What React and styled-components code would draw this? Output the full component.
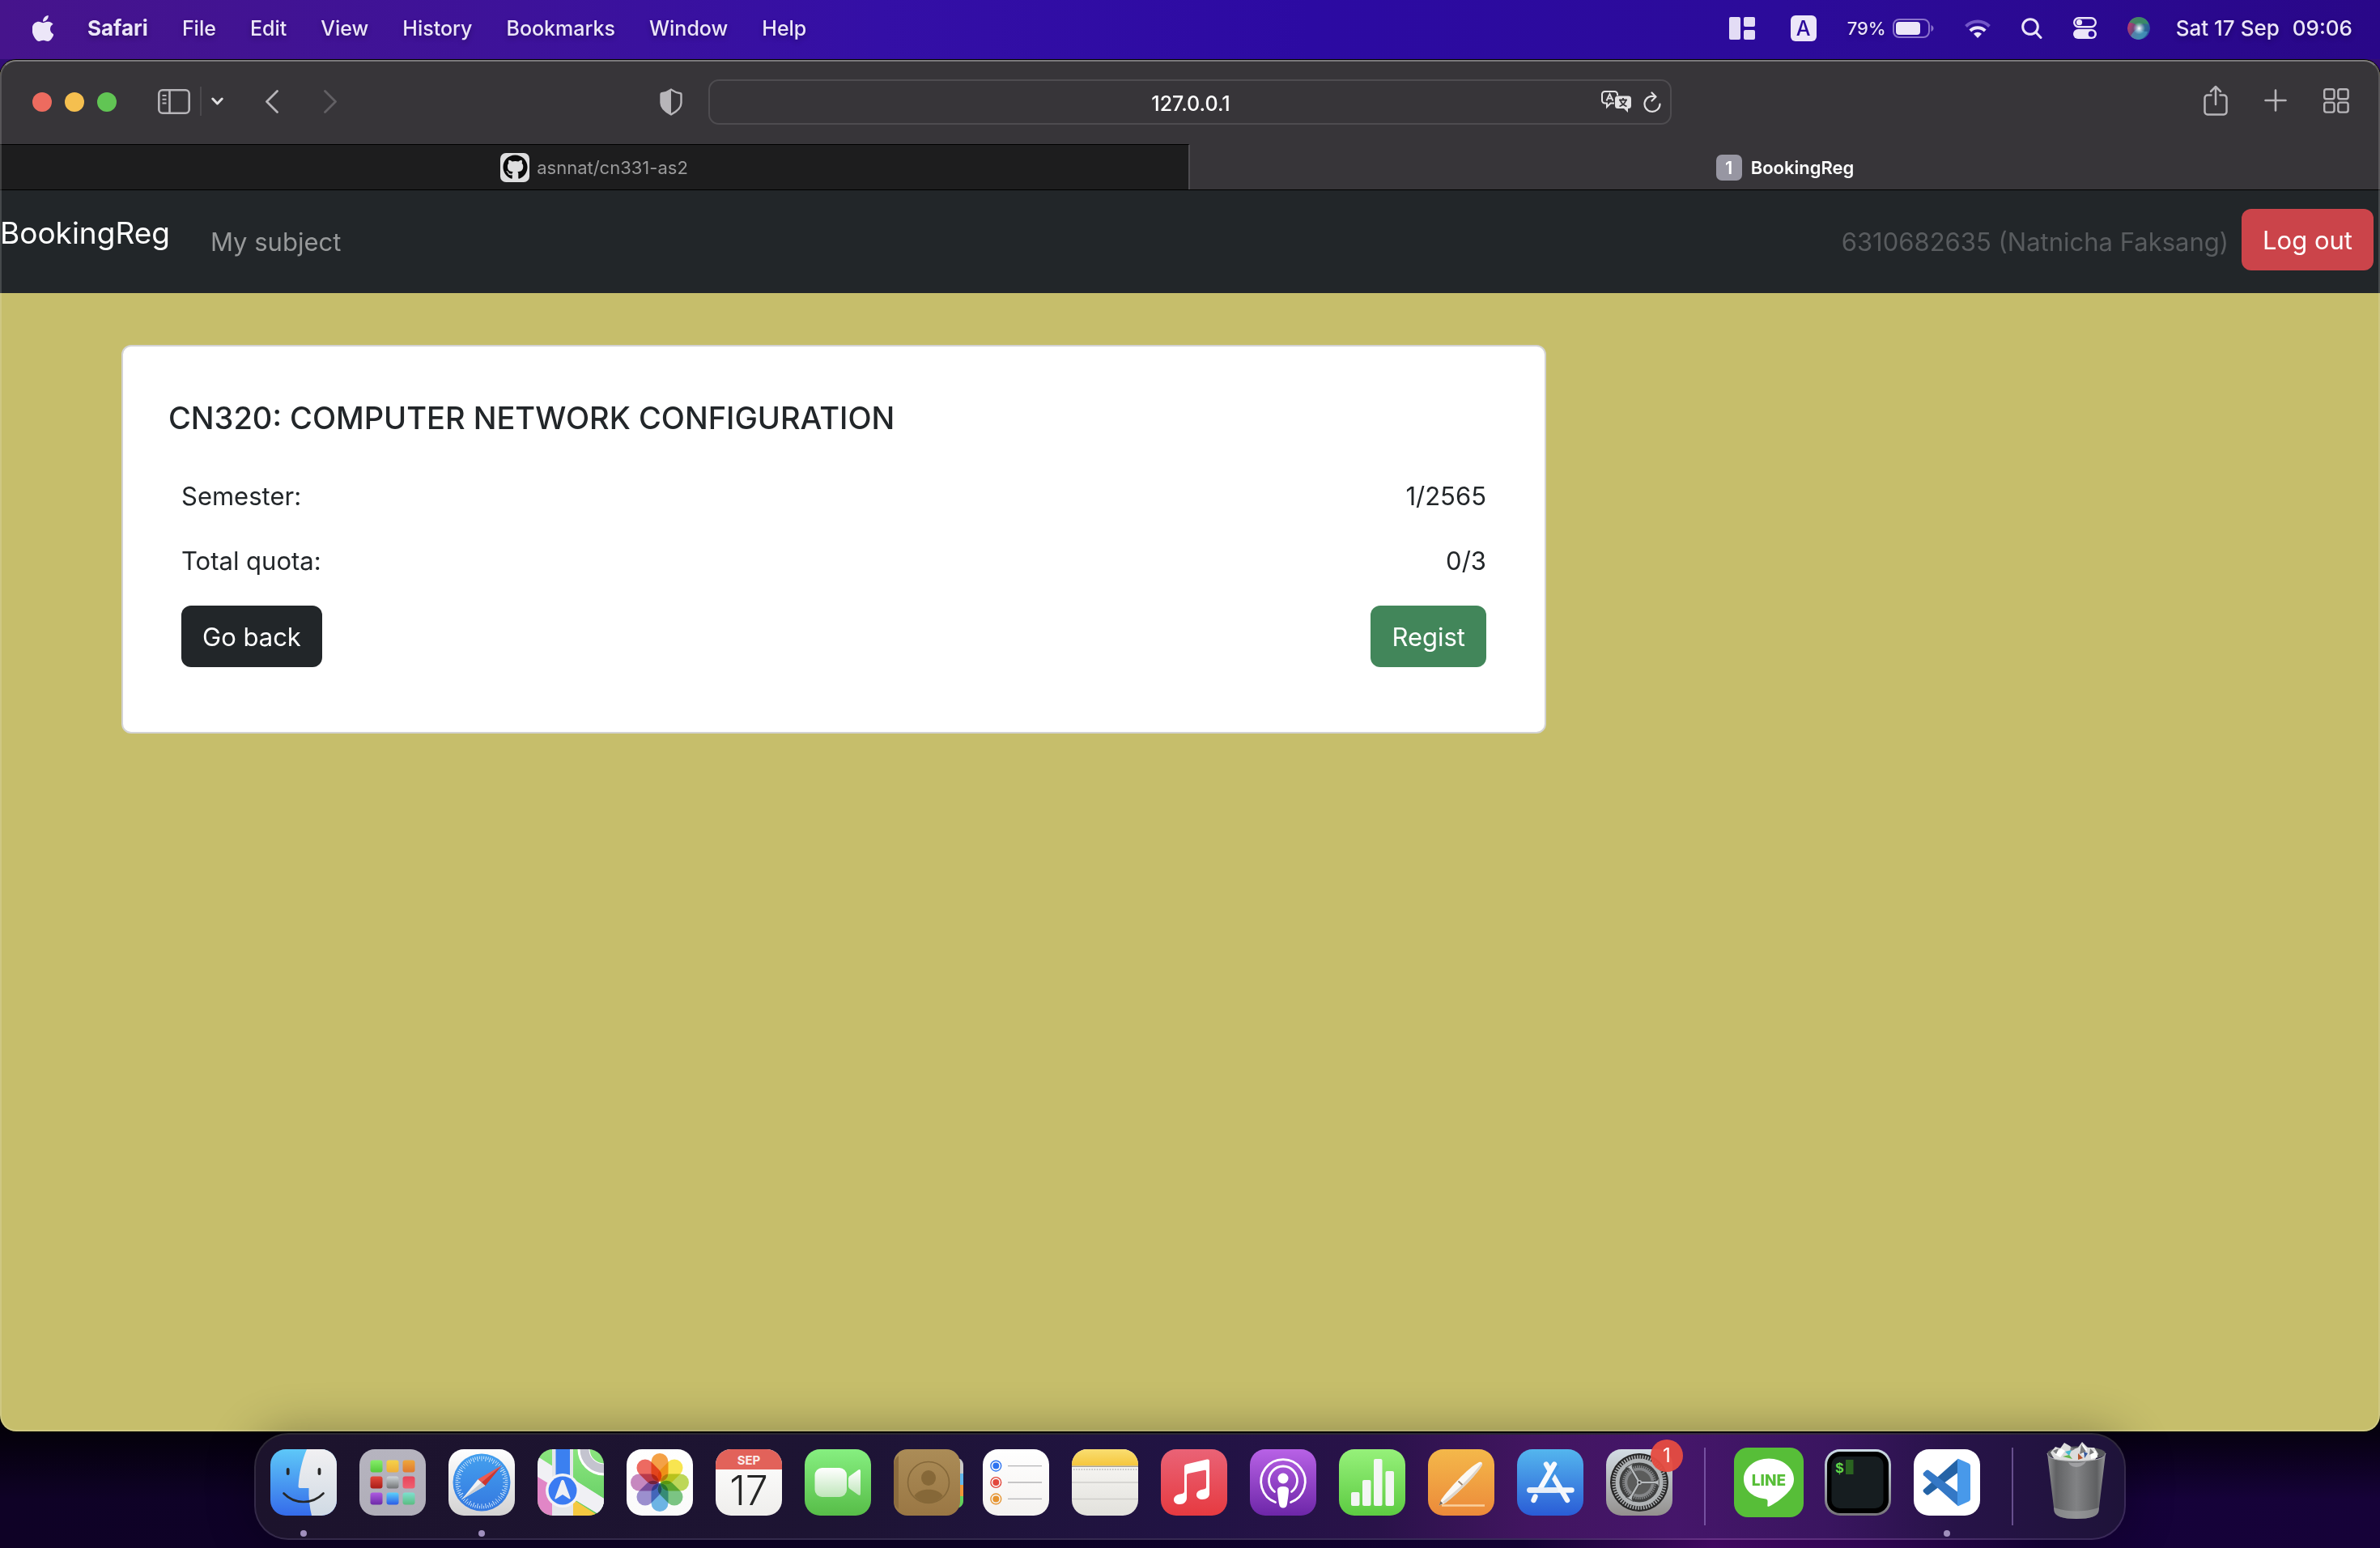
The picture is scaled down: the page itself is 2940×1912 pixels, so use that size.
import React from "react";
import styled, { createGlobalStyle } from "styled-components";
import { FaApple, FaGithub } from "react-icons/fa";

const GlobalStyle = createGlobalStyle`
  *, *::before, *::after { box-sizing: border-box; }
  body { margin: 0; background: #0a0118; }
  body, button, input { font-family: Inter, "Liberation Sans", sans-serif; }
  button { margin: 0; padding: 0; border: 0; background: none; color: inherit; cursor: pointer; }
  svg { display: block; flex: none; }
`;

const Desktop = styled.div`
  display: flex;
  flex-direction: column;
  min-height: 100vh;
  background:
    linear-gradient(#3a1080 0, #2c0a70 120px, transparent 200px),
    linear-gradient(to top, transparent 60px, rgba(0, 0, 0, 0.72) 144px),
    linear-gradient(90deg, #0f0226 0%, #0d022a 40%, #16033c 64%, #4b0a70 72%, #3a0862 78%, #15023a 86%, #160238 100%);
`;

/* ---------- menu bar ---------- */

const MenuBar = styled.header`
  display: flex;
  justify-content: space-between;
  align-items: center;
  height: 73px;
  padding: 0 34px 4px 40px;
  color: #ece6f8;
  font-size: 25px;
  font-weight: 500;
  line-height: 32px;
  text-shadow: 0 3px 6px rgba(0, 0, 0, 0.3);
  background: linear-gradient(90deg, #46148c 0%, #3d129a 22%, #340fa6 37%, #2c0aa2 55%, #2c0b9a 75%, #290788 100%);
`;

const MenuGroup = styled.nav`
  display: flex;
  align-items: center;
  gap: 42px;
`;

const MenuButton = styled.button`
  font-size: ${(p) => (p.$bold ? 26 : 25)}px;
  line-height: 32px;
  font-weight: ${(p) => (p.$bold ? 700 : 500)};
  text-shadow: inherit;
`;

const AppleLogo = styled(FaApple)`
  width: 26px;
  height: 34px;
`;

const StatusGroup = styled.div`
  display: flex;
  align-items: center;
  gap: 38px;
`;

const InputSource = styled.span`
  display: grid;
  place-items: center;
  width: 32px;
  height: 32px;
  margin: 0 0 0 6px;
  border-radius: 6px;
  background: #ece6f8;
  color: #2c0b9a;
  font-size: 25px;
  text-shadow: none;
`;

const Battery = styled.span`
  display: flex;
  align-items: center;
  gap: 8px;
  font-size: 22px;
`;

const Clock = styled.time`
  display: flex;
  gap: 16px;
  margin-left: -6px;
  font-size: 26px;
`;

/* ---------- browser window ---------- */

const Window = styled.main`
  position: relative;
  display: flex;
  flex: 1;
  flex-direction: column;
  margin-top: 1px;
  border-radius: 20px;
  overflow: hidden;
  background: #c6be6b;
  box-shadow: 0 0 0 1px #000;

  &::after {
    content: "";
    position: absolute;
    inset: 0;
    border: 2px solid rgba(255, 255, 255, 0.16);
    border-top-color: rgba(255, 255, 255, 0.34);
    border-radius: inherit;
    pointer-events: none;
  }
`;

const Toolbar = styled.div`
  display: grid;
  grid-template-columns: 1fr minmax(400px, 1190px) 1fr;
  align-items: center;
  height: 104px;
  background: #373539;
  color: #b7b5b9;
`;

const ToolbarStart = styled.div`
  display: flex;
  align-items: center;
  justify-content: space-between;
  padding: 0 32px 0 40px;
`;

const ToolbarEnd = styled.div`
  display: flex;
  align-items: center;
  justify-content: flex-end;
  gap: 45px;
  padding: 0 38px 4px 0;
`;

const Controls = styled.div`
  display: flex;
  align-items: center;
`;

const Lights = styled.div`
  display: flex;
  gap: 16px;
  margin-right: 51px;
`;

const Light = styled.button`
  width: 24px;
  height: 24px;
  border-radius: 50%;
  background: ${(p) => p.$color};
`;

const SidebarSplit = styled.div`
  display: flex;
  align-items: center;
  gap: 12px;
  margin-right: 52px;
  padding-bottom: 2px;
`;

const ThinRule = styled.span`
  width: 2px;
  height: 36px;
  background: #4b494d;
`;

const History = styled.div`
  display: flex;
  gap: 56px;
  padding-bottom: 2px;
`;

const AddressField = styled.div`
  display: grid;
  grid-template-columns: 90px 1fr 90px;
  align-items: center;
  height: 56px;
  border: 2px solid #4e4c50;
  border-radius: 13px;
  color: #e2e1e3;
`;

const AddressInput = styled.input`
  grid-column: 2;
  min-width: 0;
  padding: 3px 0 0 2px;
  border: 0;
  outline: 0;
  background: none;
  color: #fff;
  font-size: 25px;
  font-weight: 500;
  line-height: 32px;
  text-align: center;
`;

const AddressActions = styled.div`
  display: flex;
  align-items: center;
  justify-content: flex-end;
  gap: 14px;
  padding-right: 11px;
`;

const TabBar = styled.div`
  display: grid;
  grid-template-columns: 1fr 1fr;
  height: 57px;
  border-bottom: 1px solid #000;
  background: #373539;
`;

const Tab = styled.button`
  display: flex;
  align-items: center;
  justify-content: center;
  gap: ${(p) => (p.$active ? 11 : 9)}px;
  border-top: 1px solid ${(p) => (p.$active ? "#373539" : "#000")};
  border-right: ${(p) => (p.$active ? 0 : 2)}px solid #4e4c50;
  background: ${(p) => (p.$active ? "#373539" : "#1d1d1e")};
  color: ${(p) => (p.$active ? "#fff" : "#9a9a9b")};
  font-size: 22px;
  font-weight: ${(p) => (p.$active ? 600 : 400)};
  line-height: 28px;
`;

const TabIcon = styled.span`
  display: grid;
  place-items: center;
  width: ${(p) => p.$size}px;
  height: ${(p) => p.$size}px;
  border-radius: 7px;
  background: ${(p) => p.$bg};
  color: ${(p) => p.$color};
`;

/* ---------- BookingReg page ---------- */

const PageNav = styled.nav`
  display: flex;
  align-items: flex-start;
  justify-content: space-between;
  padding: 23px 8px 24px 0;
  background: #222629;
`;

const NavSide = styled.div`
  display: flex;
  align-items: flex-start;
`;

const Brand = styled.a`
  margin-right: 50px;
  color: #fff;
  font-size: 37px;
  line-height: 60px;
  text-decoration: none;
`;

const NavLink = styled.a`
  padding: 17px 0 15px;
  color: #97999a;
  font-size: 31px;
  line-height: 48px;
  text-decoration: none;
`;

const UserName = styled.span`
  padding: 17px 16px 15px;
  color: #595c5f;
  font-size: 31px;
  line-height: 48px;
`;

const buttonColors = { danger: "#cb444a", dark: "#222629", success: "#42865a" };

const PageButton = styled.button`
  padding: 15px 26px 13px;
  border-radius: 12px;
  background: ${(p) => buttonColors[p.$tone]};
  color: #fff;
  font-size: 31px;
  line-height: 48px;
`;

const Content = styled.section`
  padding: 64px 150px;
`;

const Card = styled.article`
  max-width: 1760px;
  padding: 64px 56px;
  border: 2px solid #d3d3d4;
  border-radius: 12px;
  background: #fff;
  color: #222629;
`;

const CardTitle = styled.h1`
  margin: 0 0 32px;
  font-size: 38px;
  font-weight: 500;
  line-height: 48px;
`;

const Details = styled.table`
  width: 100%;
  border-collapse: collapse;
  font-size: 31px;
  line-height: 48px;

  th, td { padding: 17px 16px 15px; font-weight: 400; text-align: left; vertical-align: top; }
  td:last-child { text-align: right; }
  tr:last-child td { padding: 16px; }
  button { display: inline-block; vertical-align: top; }
`;

/* ---------- dock ---------- */

const DockArea = styled.footer`
  display: flex;
  justify-content: center;
  padding: 2px 0 10px;
`;

const Dock = styled.nav`
  position: relative;
  display: flex;
  align-items: flex-start;
  gap: 28px;
  padding: 18px 18px 2px;
  border: 2px solid rgba(255, 255, 255, 0.16);
  border-radius: 42px;
  background: linear-gradient(90deg, #1c132c 0%, #1d1433 30%, #211344 50%, #291249 60%, #411560 68%, #45166a 76%, #3a1560 84%, #271348 91%, #1e1339 100%);
  background-clip: padding-box;
  box-shadow: 0 0 60px rgba(0, 0, 0, 0.32);
`;

const DockItem = styled.button`
  position: relative;
  display: flex;
  flex-direction: column;
  align-items: center;
  gap: 18px;
  width: 82px;

  svg { overflow: visible; }
`;

const RunningDot = styled.span`
  width: 8px;
  height: 8px;
  border-radius: 50%;
  background: ${(p) => (p.$on ? "#a08fbd" : "transparent")};
`;

const DockRule = styled.span`
  align-self: flex-start;
  width: 2px;
  height: 96px;
  margin: -2px 9px 0 11px;
  background: rgba(170, 140, 215, 0.5);
`;

const Badge = styled.span`
  position: absolute;
  top: -12px;
  right: -13px;
  display: grid;
  place-items: center;
  width: 40px;
  height: 40px;
  border-radius: 50%;
  background: rgba(229, 76, 66, 0.96);
  color: #fff;
  font-size: 24px;
  line-height: 32px;
`;

/* ---------- line icons ---------- */

const WindowsIcon = () => (
  <svg width="32" height="28" viewBox="0 0 32 28" fill="#e3dcf5">
    <rect width="14" height="28" rx="2" />
    <rect x="18" width="14" height="12" rx="2" />
    <rect x="18" y="16" width="14" height="12" rx="2" />
  </svg>
);

const BatteryIcon = () => (
  <svg width="51" height="24" viewBox="0 0 51 24">
    <rect x="1" y="1" width="44" height="22" rx="7" fill="none" stroke="#8a72cc" strokeWidth="2" />
    <rect x="4" y="4" width="30" height="16" rx="4" fill="#ece6f8" />
    <path d="M47.500 8c4 1.500 4 6.500 0 8z" fill="#8a72cc" />
  </svg>
);

const WifiIcon = () => (
  <svg width="32" height="24" viewBox="0 0 32 24" fill="none" strokeWidth="4">
    <path d="M1.500 9.500a20.500 20.500 0 0 1 29 0" stroke="#7457c8" />
    <path d="M6.800 15a13 13 0 0 1 18.400 0" stroke="#ece6f8" />
    <path d="M16 24l-5-5.200a7.300 7.300 0 0 1 10 0z" fill="#ece6f8" />
  </svg>
);

const SearchIcon = () => (
  <svg width="26" height="26" viewBox="0 0 26 26" fill="none" stroke="#ece6f8" strokeWidth="3" strokeLinecap="round">
    <circle cx="11" cy="11" r="9.300" />
    <path d="M18 18l6 6.500" />
  </svg>
);

const ControlIcon = () => (
  <svg width="29" height="27" viewBox="0 0 29 27">
    <rect x="1.200" y="1.200" width="26.600" height="11" rx="5.500" fill="none" stroke="#ece6f8" strokeWidth="2.400" />
    <circle cx="7.500" cy="6.700" r="3.600" fill="#ece6f8" />
    <rect y="15" width="29" height="12" rx="6" fill="#ece6f8" />
    <circle cx="22.500" cy="21" r="3.800" fill="#2c0b9a" />
  </svg>
);

const SiriIcon = () => (
  <svg width="28" height="28" viewBox="0 0 28 28">
    <defs>
      <linearGradient id="siri" x1="0" y1="0.300" x2="1" y2="0.700">
        <stop offset="0" stopColor="#c8386f" />
        <stop offset="0.400" stopColor="#5b4a7a" />
        <stop offset="0.700" stopColor="#2f6f90" />
        <stop offset="1" stopColor="#2a4ea0" />
      </linearGradient>
      <radialGradient id="siriGlow">
        <stop offset="0" stopColor="#fff" />
        <stop offset="1" stopColor="#bfe9ff" stopOpacity="0" />
      </radialGradient>
      <clipPath id="siriClip"><circle cx="14" cy="14" r="14" /></clipPath>
    </defs>
    <g clipPath="url(#siriClip)">
      <circle cx="14" cy="14" r="14" fill="url(#siri)" />
      <path d="M2 7C7-4 24-3 26 9c-7-2-10 0-12 4-2-3-6-6-12-6z" fill="#3a8f63" opacity="0.850" />
      <path d="M4 24c3-7 8-9 10-10 3 3 6 4 11 4-2 9-14 14-21 6z" fill="#4fa5c8" opacity="0.600" />
      <circle cx="14.500" cy="14" r="7.500" fill="url(#siriGlow)" />
    </g>
  </svg>
);

const SidebarIcon = () => (
  <svg width="40" height="31" viewBox="0 0 40 31" fill="none" stroke="currentColor" strokeWidth="2.600">
    <rect x="1.300" y="1.300" width="37.400" height="28.400" rx="4.500" />
    <path d="M14.500 1v29" />
    <path d="M5.500 8h5M5.500 12.700h5M5.500 17.400h5" strokeWidth="2" />
  </svg>
);

const ChevronDown = () => (
  <svg width="15" height="10" viewBox="0 0 15 10" fill="none" stroke="#e0dfe1" strokeWidth="3" strokeLinecap="round" strokeLinejoin="round">
    <path d="M1.800 2l5.700 6 5.700-6" />
  </svg>
);

const Chevron = ({ flip, color }) => (
  <svg width="16" height="29" viewBox="0 0 16 29" fill="none" stroke={color} strokeWidth="2.800" strokeLinecap="round" strokeLinejoin="round">
    <path d={flip ? "M1.500 1.500l13 13-13 13" : "M14.500 1.500l-13 13 13 13"} />
  </svg>
);

const ShieldIcon = () => (
  <svg width="28" height="34" viewBox="0 0 28 34" fill="none">
    <path d="M14 1.600c3.600 2.700 7.600 4 11.500 4.600q1 .200 1 1.300V18c0 7-6.500 11.300-12.500 14.400C8 29.300 1.500 25 1.500 18V7.500q0-1.100 1-1.300C6.400 5.600 10.400 4.300 14 1.600z" stroke="currentColor" strokeWidth="2.400" />
    <path d="M14 1.600C10.400 4.300 6.400 5.600 2.500 6.200q-1 .200-1 1.300V18c0 7 6.500 11.300 12.500 14.400z" fill="currentColor" />
  </svg>
);

const TranslateIcon = () => (
  <svg width="38" height="28" viewBox="0 0 38 28" fill="none" stroke="currentColor" strokeWidth="2">
    <path d="M16 15.500h-4.500L7 20v-4.500H4.500A3.500 3.500 0 0 1 1 12V4.500A3.500 3.500 0 0 1 4.500 1h12A3.500 3.500 0 0 1 20 4.500V6" />
    <path d="M6.500 12.500L10.500 4l4 8.500M8 9.600h5" strokeWidth="1.800" />
    <path d="M20.500 6.500h13A3.500 3.500 0 0 1 37 10v8.500a3.500 3.500 0 0 1-3.500 3.500H33v5l-5-5h-7.500a3.500 3.500 0 0 1-3.500-3.500V10a3.500 3.500 0 0 1 3.500-3.500z" fill="currentColor" stroke="none" />
    <path d="M22 11.500h10M27 9v2.500M30.500 11.500c-1 3.500-4 6.500-8 8M23.500 11.500c1 3.500 4 6.500 8 8" stroke="#373539" strokeWidth="1.800" />
  </svg>
);

const ReloadIcon = () => (
  <svg width="22" height="27" viewBox="0 0 22 27" fill="none" stroke="currentColor" strokeWidth="2.200" strokeLinecap="round" strokeLinejoin="round">
    <path d="M14 6.300A9.500 9.500 0 1 0 20.500 15.500" />
    <path d="M10.500 1.500l5 5-5 5" />
  </svg>
);

const ShareIcon = () => (
  <svg width="30" height="38" viewBox="0 0 30 38" fill="none" stroke="currentColor" strokeWidth="2.500" strokeLinecap="round" strokeLinejoin="round">
    <path d="M9.500 12.500H5A3.500 3.500 0 0 0 1.500 16v17A3.500 3.500 0 0 0 5 36.500h20a3.500 3.500 0 0 0 3.500-3.500V16a3.500 3.500 0 0 0-3.500-3.500h-4.500" />
    <path d="M15 24V2M9 8l6-6 6 6" />
  </svg>
);

const PlusIcon = () => (
  <svg width="28" height="28" viewBox="0 0 28 28" fill="none" stroke="currentColor" strokeWidth="2.600" strokeLinecap="round">
    <path d="M14 1.500v25M1.500 14h25" />
  </svg>
);

const GridIcon = () => (
  <svg width="32" height="31" viewBox="0 0 32 31" fill="none" stroke="currentColor" strokeWidth="2.400">
    <rect x="1.200" y="1.200" width="12.300" height="12" rx="2.500" />
    <rect x="18.300" y="1.200" width="12.300" height="12" rx="2.500" />
    <rect x="1.200" y="17.600" width="12.300" height="12" rx="2.500" />
    <rect x="18.300" y="17.600" width="12.300" height="12" rx="2.500" />
  </svg>
);

/* ---------- dock artwork ---------- */

const Gradient = ({ id, from, to }) => (
  <linearGradient id={id} x1="0" y1="0" x2="0" y2="1">
    <stop offset="0" stopColor={from} />
    <stop offset="1" stopColor={to} />
  </linearGradient>
);

const AppTile = ({ name, from, to, children }) => (
  <svg width="82" height="82" viewBox="0 0 82 82">
    <defs>
      <Gradient id={`${name}-bg`} from={from} to={to} />
      <clipPath id={`${name}-clip`}>
        <rect width="82" height="82" rx="19" />
      </clipPath>
    </defs>
    <g clipPath={`url(#${name}-clip)`}>
      <rect width="82" height="82" fill={`url(#${name}-bg)`} />
      {children}
    </g>
  </svg>
);

const Finder = () => (
  <AppTile name="finder" from="#5ec8f8" to="#356bea">
    <defs><Gradient id="finder-face" from="#f1f0f2" to="#d0dae4" /></defs>
    <path d="M45 0C39 14 35.500 30 34.500 46q0 2 2 2H47.500C47 60 48.500 72 51 82H82V0z" fill="url(#finder-face)" />
    <g stroke="#272727" strokeLinecap="round" fill="none">
      <path d="M21.700 25v5M60.500 25v5" strokeWidth="3.800" />
      <path d="M16.500 54.500C30 68.500 52 68.500 65.500 54.500" strokeWidth="2.600" />
    </g>
  </AppTile>
);

const launchColors = [
  ["#86ee6a", "#54c93a"], ["#f5d24a", "#efae38"], ["#eea73b", "#e0782f"],
  ["#e5493c", "#a81d17"], ["#cfd6da", "#727476"], ["#e8445a", "#ef6070"],
  ["#ad5be0", "#6d2aa8"], ["#5cd1fb", "#2b5be6"], ["#7fe0cf", "#5bbd82"],
];

const Launchpad = () => (
  <AppTile name="launch" from="#b6b4bf" to="#b0aeb9">
    {launchColors.map(([from, to], i) => (
      <g key={from}>
        <defs><Gradient id={`launch-${i}`} from={from} to={to} /></defs>
        <rect x={13.500 + (i % 3) * 20} y={13.500 + Math.floor(i / 3) * 20} width="15" height="15" rx="3" fill={`url(#launch-${i})`} />
      </g>
    ))}
  </AppTile>
);

const ticks = Array.from({ length: 72 }, (_, i) => i * 5);

const Safari = () => (
  <AppTile name="safari" from="#ffffff" to="#d3d2d2">
    <defs><Gradient id="safari-dial" from="#44a0ee" to="#3478e0" /></defs>
    <circle cx="41" cy="41" r="35.500" fill="url(#safari-dial)" />
    {ticks.map((a, i) => (
      <path key={a} d={`M41 8.500v${i % 2 ? 3.500 : 6}`} stroke="#d9ecfb" strokeWidth="0.900" transform={`rotate(${a} 41 41)`} />
    ))}
    <path d="M16.500 62L36.500 37 45.500 45z" fill="#f2f2f2" />
    <path d="M16.500 62L41 41 45.500 45z" fill="#c9ced4" />
    <path d="M66 20L36.500 37 41 41z" fill="#ee5a50" />
    <path d="M66 20L41 41 45.500 45z" fill="#cf362e" />
  </AppTile>
);

const Maps = () => (
  <AppTile name="maps" from="#8be57e" to="#62cc62">
    <path d="M0 30L19 38V82H0z" fill="#e186c6" />
    <path d="M44 62L78 84H44z" fill="#f5c841" />
    <path d="M0 9L82 61v23L0 34z" fill="#f0f0f4" />
    <path d="M18 0h26v82H18z" fill="#e4e6ea" />
    <path d="M44 37L82 61v23L44 61z" fill="#f0f0f4" />
    <path d="M22.500 0H40v40H22.500z" fill="#3b80f0" />
    <circle cx="82" cy="0" r="25" fill="none" stroke="#fff" strokeWidth="15" />
    <circle cx="82" cy="0" r="24" fill="none" stroke="#c4c4cf" strokeWidth="11" />
    <circle cx="31" cy="51" r="21" fill="#f3f3f6" />
    <circle cx="31" cy="51" r="17.500" fill="#3a7bf2" />
    <path d="M31 38c1 0 1.500.500 2 1.500L40.500 60c.500 1.500-.500 2-1.500 1.200L31 56l-8 5.200c-1 .800-2 .300-1.500-1.200L29 39.500c.500-1 1-1.500 2-1.500z" fill="#eef0f4" />
  </AppTile>
);

const petals = ["#f49a38", "#f8e342", "#b8d44c", "#71c07a", "#62aee2", "#9387ca", "#c27fba", "#ec5f55"];

const PetalGroup = styled.g`
  isolation: isolate;

  rect { mix-blend-mode: multiply; }
`;

const Photos = () => (
  <AppTile name="photos" from="#ffffff" to="#fafafa">
    <PetalGroup>
      {petals.map((c, i) => (
        <rect key={c} x="30.500" y="5" width="21" height="35" rx="10.500" fill={c} opacity="0.930" transform={`rotate(${i * 45} 41 41)`} />
      ))}
    </PetalGroup>
  </AppTile>
);

const Calendar = () => (
  <AppTile name="cal" from="#ffffff" to="#efeeec">
    <path d="M0 0h82v25H0z" fill="#e2625a" />
    <text x="41" y="19" fontFamily="Inter, sans-serif" fontSize="15" fontWeight="700" fill="#fbeceb" textAnchor="middle">SEP</text>
    <text x="41" y="69" fontFamily="Inter, sans-serif" fontSize="50" fontWeight="300" fill="#262626" textAnchor="middle">17</text>
  </AppTile>
);

const FaceTime = () => (
  <AppTile name="ft" from="#86ef80" to="#57bd48">
    <defs><Gradient id="ft-cam" from="#ffffff" to="#bfe6ba" /></defs>
    <rect x="12.500" y="23" width="39.500" height="36" rx="9" fill="url(#ft-cam)" />
    <path d="M54 36.500q0-2 1.500-3.200L66 25.700q3-1.700 3 1.600v27.400q0 3.300-3 1.600L55.500 48.700Q54 47.500 54 45.500z" fill="url(#ft-cam)" />
  </AppTile>
);

const Contacts = () => (
  <svg width="82" height="82" viewBox="0 0 82 82">
    <defs><Gradient id="contacts" from="#ab8c57" to="#9a7744" /></defs>
    <path d="M70 10q16-1 16 10v10H70z" fill="#c9c8c6" />
    <path d="M70 30h16v14H70z" fill="#62b8ec" />
    <path d="M70 44h16v14H70z" fill="#ee9838" />
    <path d="M70 58h16v6q0 10-16 10z" fill="#62d05c" />
    <rect width="82" height="82" rx="17" fill="url(#contacts)" />
    <path d="M6 8v66Q0 70 0 62V20Q0 12 6 8z" fill="#8c6c3e" />
    <circle cx="43" cy="41" r="25.500" fill="none" stroke="#846739" strokeWidth="1.600" />
    <ellipse cx="43" cy="35.500" rx="9" ry="9.500" fill="#866838" />
    <path d="M25.500 57.500C31 47 55 47 60.500 57.500 51 69.500 35 69.500 25.500 57.500z" fill="#866838" />
  </svg>
);

const Reminders = () => (
  <AppTile name="rem" from="#ffffff" to="#f4f2f0">
    {["#2d73f0", "#e2473c", "#e5932f"].map((c, i) => (
      <g key={c} transform={`translate(0 ${i * 20.400})`}>
        <circle cx="16.300" cy="20.600" r="6.400" fill="none" stroke={c} strokeWidth="1.400" />
        <circle cx="16.300" cy="20.600" r="4" fill={c} />
        <path d="M31 20.600h42" stroke="#b4b4b6" strokeWidth="1.300" />
      </g>
    ))}
  </AppTile>
);

const Notes = () => (
  <AppTile name="notes" from="#fbfaf8" to="#e2e1dc">
    <defs><Gradient id="notes-top" from="#f9de72" to="#f6c63c" /></defs>
    <path d="M0 0h82v20.500H0z" fill="url(#notes-top)" />
    <path d="M0 21.200h82" stroke="#a8a49a" strokeWidth="1.500" />
    <path d="M2 25h80" stroke="#b5b4b1" strokeWidth="1.500" strokeDasharray="1.500 1.700" />
    <path d="M0 41h82M0 61.500h82" stroke="#cfcecb" strokeWidth="1.400" />
  </AppTile>
);

const Music = () => (
  <AppTile name="music" from="#ea6376" to="#e63a40">
    <path d="M29 21.500q0-2.500 2.500-3L57 12.600q3-.600 3 2.200V55c0 4-3.500 7-8.500 7-4 0-7.500-2-7.500-5.500 0-4 3.500-6 7.500-6.700 3-.600 4.500-1 4.500-3.300V27.200q0-1.800-1.800-1.400L33.700 30q-1.700.400-1.700 2V60c0 4.500-3.500 8-8.500 8-4.500 0-7.500-2.200-7.500-5.600 0-3.900 3.500-6 7.500-6.800 4-.700 5.500-1.200 5.500-4z" fill="#fff" />
  </AppTile>
);

const Podcasts = () => (
  <AppTile name="pod" from="#b862e6" to="#6d26a8">
    <g fill="none" stroke="#fff" strokeWidth="2.800" strokeLinecap="round">
      <path d="M31.500 65.500a27.300 27.300 0 1 1 19 0" />
      <path d="M30.500 52.500a17.500 17.500 0 1 1 21 0" />
    </g>
    <circle cx="41" cy="36" r="6.500" fill="#fff" />
    <path d="M34 50.500q0-4.500 7-4.500t7 4.500c0 4-1.300 12-2 17q-.800 5-5 5t-5-5c-.700-5-2-13-2-17z" fill="#fff" />
  </AppTile>
);

const Numbers = () => (
  <AppTile name="num" from="#96f17a" to="#5dcb42">
    <g fill="#f3f6f4">
      <rect x="15" y="53" width="10.500" height="17" rx="2" />
      <rect x="29" y="38" width="10.500" height="32" rx="2" />
      <rect x="43" y="12" width="10.500" height="58" rx="2" />
      <rect x="57.500" y="27" width="10.500" height="43" rx="2" />
    </g>
  </AppTile>
);

const Pages = () => (
  <AppTile name="pages" from="#f4b84a" to="#ec8a3a">
    <path d="M17 69.500h53" stroke="#f9cf9c" strokeWidth="2.600" />
    <path d="M13.500 69.500l3-7.500C26 49 48 24 63 16c3-1.200 5 .800 3.800 3.600C60 32 36 56 20.500 67z" fill="#fbf8f4" />
    <path d="M20.500 67C36 56 60 32 66.800 19.600L66.600 17C54 33 36 51 18 65z" fill="#dcd5cc" />
    <path d="M37.500 39.500l5 4.500" stroke="#99826a" strokeWidth="1.800" />
    <path d="M13.500 69.500l2-5.500 3 3z" fill="#7c6a58" />
  </AppTile>
);

const AppStore = () => (
  <AppTile name="store" from="#54b6ee" to="#2a5cd6">
    <g stroke="#f4f7fb" strokeWidth="6.400" strokeLinecap="round" fill="none">
      <path d="M36 18.500l26 44.500" />
      <path d="M15.500 50.500h52" />
      <path d="M22.500 58.500L20.500 63" />
    </g>
    <path d="M48.500 19L30 50" stroke="#3f93e4" strokeWidth="9" fill="none" />
    <path d="M46 18.500L28.500 49" stroke="#f9fbfe" strokeWidth="6.400" strokeLinecap="round" fill="none" />
    <path d="M15.500 50.500h32" stroke="#e9eff7" strokeWidth="6.400" strokeLinecap="round" />
  </AppTile>
);

const Settings = () => (
  <AppTile name="set" from="#d3dde4" to="#93908e">
    <circle cx="41" cy="41" r="36" fill="#262626" />
    <circle cx="41" cy="41" r="31.500" fill="none" stroke="#a9acae" strokeWidth="4.500" strokeDasharray="1.700 1.600" />
    <circle cx="41" cy="41" r="27" fill="#3f4040" stroke="#b0b4b6" strokeWidth="5" />
    <circle cx="41" cy="41" r="19.500" fill="none" stroke="#858789" strokeWidth="3" strokeDasharray="1.400 1.200" />
    <circle cx="41" cy="41" r="16.500" fill="#6a6b6b" stroke="#858789" strokeWidth="3.500" />
    <circle cx="41" cy="41" r="14.500" fill="#5b5c5b" />
    {[0, 120, 240].map((a) => (
      <path key={a} d="M41 39.500H60q4 0 5-4v11q-1-4-5-4H41z" fill="#b9bdbf" stroke="#3a3a3a" strokeWidth="0.600" transform={`rotate(${a} 41 41)`} />
    ))}
    <circle cx="41" cy="41" r="3" fill="#b9bdbf" />
    <circle cx="41" cy="41" r="1.500" fill="#333" />
  </AppTile>
);

const Line = () => (
  <svg width="82" height="82" viewBox="0 0 82 82">
    <rect x="-2" y="-2" width="86" height="86" rx="17" fill="#57be38" />
    <path d="M41 11.500c17 0 31 11.300 31 25.500 0 7-3.500 12.500-8.500 17.500C56 62 47 68 41.500 70.500c-3 1.200-2-1.500-2-4 .300-3.500 0-4.700-3.500-5.200C20.500 59.500 10 49.500 10 37 10 22.800 24 11.500 41 11.500z" fill="#fff" />
    <text x="41" y="45" fontFamily="Inter, sans-serif" fontSize="19" fontWeight="800" fill="#57be38" textAnchor="middle">LINE</text>
  </svg>
);

const Terminal = () => (
  <AppTile name="term" from="#cddce6" to="#77757a">
    <rect x="3" y="3" width="76" height="76" rx="16" fill="#000" />
    <rect x="8.500" y="9" width="64" height="64" rx="10" fill="#161d20" />
    <text x="13" y="29" fontFamily="Liberation Mono, monospace" fontSize="18" fontWeight="700" fill="#63d84a">$</text>
    <path d="M26 13h9.500v18H26z" fill="#2a6420" />
  </AppTile>
);

const VSCode = () => (
  <AppTile name="vsc" from="#ffffff" to="#ffffff">
    <path d="M54.500 12V29L18.500 56q-1.500 1-3 0l-3.300-3q-1.500-1.600 0-3.200z" fill="#2463a6" />
    <path d="M54.500 70V53L18.500 26q-1.500-1-3 0l-3.300 3q-1.500 1.600 0 3.200z" fill="#3478c6" />
    <path d="M54 12.500q0-1 1.500-.500L68 17.500q2 1 2 3v41q0 2-2 3L55.500 70q-1.500.500-1.500-.500z" fill="#4899ea" />
  </AppTile>
);

const Trash = () => (
  <svg width="82" height="82" viewBox="0 0 82 82">
    <defs>
      <linearGradient id="trash" x1="0" x2="1">
        <stop offset="0" stopColor="#8f9092" />
        <stop offset="0.150" stopColor="#616264" />
        <stop offset="0.500" stopColor="#828385" />
        <stop offset="0.850" stopColor="#5e5f61" />
        <stop offset="1" stopColor="#98999b" />
      </linearGradient>
    </defs>
    <ellipse cx="41" cy="5" rx="36" ry="8.500" fill="#57585c" />
    <path d="M9 4l6-7 6 2 5-7 7 4 4 4 6-2 5-7 7 7 8 0 5 8-4 7-14 2-20 0-16-2z" fill="#dcdcdc" />
    <path d="M14 6l8-7 5 3-6 8z M45 2l4-8 5 6-3 9z M58 3l7-1 2 8-8 2z" fill="#fff" />
    <path d="M12 2l7-3-3 7zM47-6l6 9-8 3zM58-1l5 5-6 3zM34-3l5 3-6 3z" fill="#7b7b7d" />
    <path d="M27 3l8-2-3 7z" fill="#46b9cf" />
    <path d="M24 9l8-2 4 5z" fill="#67b54a" />
    <path d="M43 5l6 6-6 2z" fill="#b5552f" />
    <path d="M50 3l5 2-4 6z" fill="#35589b" />
    <path d="M5 5c1 7 14 9.500 36 9.500S76 12 77 5l-8.500 71q-1 10-27.500 10T13.500 76z" fill="url(#trash)" />
    <path d="M31 16c6 2 16 1 22-1-4 8-18 10-22 1z" fill="#b7b8ba" opacity="0.600" />
    <path d="M13 72q28 9 56 0l-.600 5q-2 9-27.400 9t-27.400-9z" fill="#a3a4a6" opacity="0.550" />
    <path d="M5 5c1 7 14 9.500 36 9.500S76 12 77 5" fill="none" stroke="#b5b6b8" strokeWidth="1" />
  </svg>
);

const dockGroups = [
  [
    ["Finder", Finder, true], ["Launchpad", Launchpad], ["Safari", Safari, true], ["Maps", Maps],
    ["Photos", Photos], ["Calendar", Calendar], ["FaceTime", FaceTime], ["Contacts", Contacts],
    ["Reminders", Reminders], ["Notes", Notes], ["Music", Music], ["Podcasts", Podcasts],
    ["Numbers", Numbers], ["Pages", Pages], ["App Store", AppStore], ["System Preferences", Settings, false, 1],
  ],
  [["LINE", Line], ["Terminal", Terminal], ["Visual Studio Code", VSCode, true]],
  [["Trash", Trash]],
];

const menus = ["File", "Edit", "View", "History", "Bookmarks", "Window", "Help"];

export default function App() {
  return (
    <>
      <GlobalStyle />
      <Desktop>
        <MenuBar>
          <MenuGroup>
            <MenuButton aria-label="Apple menu"><AppleLogo viewBox="10 18 364 476" /></MenuButton>
            <MenuButton $bold>Safari</MenuButton>
            {menus.map((m) => <MenuButton key={m}>{m}</MenuButton>)}
          </MenuGroup>
          <StatusGroup>
            <WindowsIcon />
            <InputSource>A</InputSource>
            <Battery>79%<BatteryIcon /></Battery>
            <WifiIcon />
            <SearchIcon />
            <ControlIcon />
            <SiriIcon />
            <Clock><span>Sat 17 Sep</span><span>09:06</span></Clock>
          </StatusGroup>
        </MenuBar>

        <Window>
          <Toolbar>
            <ToolbarStart>
              <Controls>
                <Lights>
                  <Light $color="#ed6b5f" aria-label="Close" />
                  <Light $color="#f5bf4f" aria-label="Minimise" />
                  <Light $color="#61c554" aria-label="Zoom" />
                </Lights>
                <SidebarSplit>
                  <button aria-label="Sidebar"><SidebarIcon /></button>
                  <ThinRule />
                  <button aria-label="Tab groups"><ChevronDown /></button>
                </SidebarSplit>
                <History>
                  <button aria-label="Back"><Chevron color="#b7b5b9" /></button>
                  <button aria-label="Forward"><Chevron flip color="#626064" /></button>
                </History>
              </Controls>
              <button aria-label="Privacy report"><ShieldIcon /></button>
            </ToolbarStart>
            <AddressField>
              <AddressInput aria-label="Address" defaultValue="127.0.0.1" />
              <AddressActions>
                <button aria-label="Translate"><TranslateIcon /></button>
                <button aria-label="Reload"><ReloadIcon /></button>
              </AddressActions>
            </AddressField>
            <ToolbarEnd>
              <button aria-label="Share"><ShareIcon /></button>
              <button aria-label="New tab"><PlusIcon /></button>
              <button aria-label="Tab overview"><GridIcon /></button>
            </ToolbarEnd>
          </Toolbar>

          <TabBar>
            <Tab>
              <TabIcon $size={36} $bg="#dededf" $color="#0a0a0a"><FaGithub size={31} /></TabIcon>
              asnnat/cn331-as2
            </Tab>
            <Tab $active>
              <TabIcon $size={32} $bg="#9796a2" $color="#fff">1</TabIcon>
              BookingReg
            </Tab>
          </TabBar>

          <PageNav>
            <NavSide>
              <Brand href="#home">BookingReg</Brand>
              <NavLink href="#subjects">My subject</NavLink>
            </NavSide>
            <NavSide>
              <UserName>6310682635 (Natnicha Faksang)</UserName>
              <PageButton $tone="danger">Log out</PageButton>
            </NavSide>
          </PageNav>

          <Content>
            <Card>
              <CardTitle>CN320: COMPUTER NETWORK CONFIGURATION</CardTitle>
              <Details>
                <tbody>
                  <tr><th scope="row">Semester:</th><td>1/2565</td></tr>
                  <tr><th scope="row">Total quota:</th><td>0/3</td></tr>
                  <tr>
                    <td><PageButton $tone="dark">Go back</PageButton></td>
                    <td><PageButton $tone="success">Regist</PageButton></td>
                  </tr>
                </tbody>
              </Details>
            </Card>
          </Content>
        </Window>

        <DockArea>
          <Dock aria-label="Dock">
            {dockGroups.map((group, g) => (
              <React.Fragment key={g}>
                {g > 0 && <DockRule />}
                {group.map(([name, Icon, running, badge]) => (
                  <DockItem key={name} aria-label={name}>
                    <Icon />
                    {badge && <Badge>{badge}</Badge>}
                    <RunningDot $on={running} />
                  </DockItem>
                ))}
              </React.Fragment>
            ))}
          </Dock>
        </DockArea>
      </Desktop>
    </>
  );
}
